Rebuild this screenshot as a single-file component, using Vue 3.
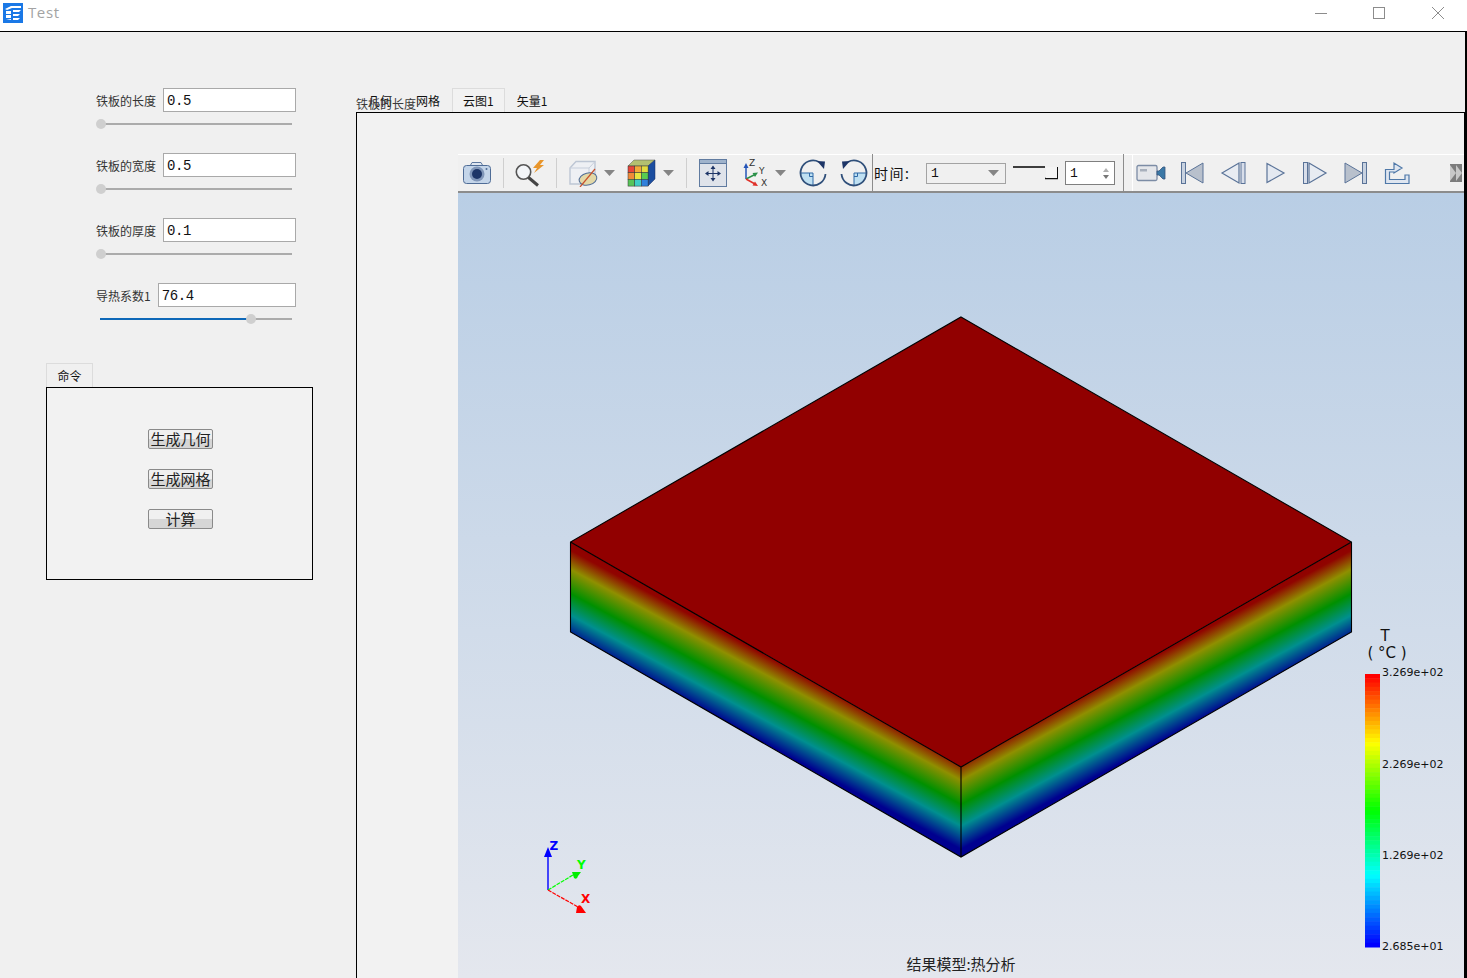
<script setup>
const params = [
  { label: '铁板的长度', value: '0.5', pct: 0 },
  { label: '铁板的宽度', value: '0.5', pct: 0 },
  { label: '铁板的厚度', value: '0.1', pct: 0 },
  { label: '导热系数1', value: '76.4', pct: 78 },
]

const commands = ['生成几何', '生成网格', '计算']
const tabs = ['几何', '网格', '云图1', '矢量1']

// legend colours, red at the top to blue at the bottom
const stops = [
  [0, [255, 0, 0]],
  [0.25, [255, 255, 0]],
  [0.5, [0, 255, 0]],
  [0.74, [0, 255, 255]],
  [1, [0, 0, 255]],
]

function legendColor(t) {
  for (let i = 1; i < stops.length; i++) {
    if (t <= stops[i][0]) {
      const [t0, c0] = stops[i - 1]
      const [t1, c1] = stops[i]
      const k = (t - t0) / (t1 - t0)
      const c = c0.map((v, n) => Math.round(v + (c1[n] - v) * k))
      return `rgb(${c.join(',')})`
    }
  }
  return 'rgb(0,0,255)'
}

const bandCount = 64
const bandHeight = 273 / bandCount
const bands = Array.from({ length: bandCount }, (_, i) => ({
  y: 674 + i * bandHeight,
  color: legendColor(i / (bandCount - 1)),
}))

const legendLabels = [
  { text: '3.269e+02', y: 676 },
  { text: '2.269e+02', y: 768 },
  { text: '1.269e+02', y: 859 },
  { text: '2.685e+01', y: 950 },
]

// offsets along a 100px gradient, the plate side is 90px tall
const faceStops = [
  [0, '#900000'],
  [0.08, '#900400'],
  [0.27, '#8f8f00'],
  [0.513, '#009000'],
  [0.729, '#008f8f'],
  [0.96, '#00008f'],
]

const cubeCells = [
  ['#e8453a', '#f4a838', '#e4dc40'],
  ['#f08a38', '#e8e440', '#58cc50'],
  ['#58c458', '#40ccc4', '#3080dc'],
]
</script>

<template>
  <div class="window">
    <header class="titlebar">
      <svg class="app-icon" width="20" height="20" viewBox="0 0 20 20">
        <rect width="20" height="20" fill="#1a78e6" />
        <path d="M2 6 L8 3 L18 3 L18 5 L9 5 L4 7 Z" fill="#fff" />
        <path d="M3 8 h5 v3 h-5 Z M3 12 h5 v3 h-5 Z M3 16 l5 1 v-1 h-5 Z" fill="#fff" />
        <path d="M10 7 h8 l-2 2 h-6 Z M10 11 h7 l-2 2 h-5 Z M10 15 h7 l-2 2 h-5 Z" fill="#fff" />
      </svg>
      <span class="app-title">Test</span>
      <div class="win-controls">
        <span class="win-btn"><svg width="14" height="14" viewBox="0 0 14 14"><path d="M1 7.5 H13" stroke="#8c8c8c" fill="none" /></svg></span>
        <span class="win-btn"><svg width="14" height="14" viewBox="0 0 14 14"><rect x="1.5" y="1.5" width="11" height="11" stroke="#8c8c8c" fill="none" /></svg></span>
        <span class="win-btn"><svg width="14" height="14" viewBox="0 0 14 14"><path d="M1 1 L13 13 M13 1 L1 13" stroke="#8c8c8c" fill="none" /></svg></span>
      </div>
    </header>

    <div class="body">
      <aside class="sidebar">
        <div class="params">
          <div v-for="p in params" :key="p.label" class="param">
            <div class="param-row">
              <label class="param-label">{{ p.label }}</label>
              <input class="param-input" :value="p.value" readonly />
            </div>
            <div class="slider">
              <div class="slider-fill" :style="{ width: p.pct + '%' }"></div>
              <div class="slider-thumb" :style="{ left: p.pct + '%' }"></div>
            </div>
          </div>
        </div>

        <div class="command">
          <div class="command-tab">命令</div>
          <div class="command-pane">
            <button v-for="c in commands" :key="c" class="cmd-btn">{{ c }}</button>
          </div>
        </div>
      </aside>

      <main class="main">
        <nav class="tabs">
          <span class="stray-label">铁板的长度</span>
          <span v-for="t in tabs" :key="t" class="tab" :class="{ active: t === '云图1' }">{{ t }}</span>
        </nav>

        <section class="pane">
          <div class="toolbar">
            <!-- camera -->
            <svg class="ml-4" width="30" height="28" viewBox="0 0 30 28">
              <path d="M8 7 L10 3.5 H19 L21 7" fill="#dfe6f0" stroke="#5c779e" />
              <rect x="1.5" y="6.5" width="27" height="18" rx="3" fill="#c4d5e9" stroke="#4f6c96" />
              <circle cx="15" cy="15" r="7.5" fill="#8096b8" />
              <circle cx="15" cy="15" r="5" fill="#1d3567" />
              <circle cx="24.5" cy="10" r="1" fill="#4f6c96" />
            </svg>
            <i class="sep ml-11"></i>
            <!-- search with bolt -->
            <svg class="ml-11" width="30" height="28" viewBox="0 0 30 28">
              <circle cx="8.5" cy="13" r="7.2" fill="#f3f5f8" stroke="#555" stroke-width="1.6" />
              <path d="M13.5 18.5 L23 26.5" stroke="#444" stroke-width="3" />
              <path d="M25 1 L18 9 H22 L19 14 L29 6 H25 L29 1 Z" fill="#e8952b" />
            </svg>
            <i class="sep ml-11"></i>
            <!-- box with hidden surface -->
            <svg class="ml-11" width="30" height="28" viewBox="0 0 30 28">
              <path d="M2 9 L8 2.5 H27 V18 L21 25 H2 Z" fill="#eef0f4" stroke="#bdc6d4" stroke-width="1.4" />
              <path d="M2 9 H21 V25 M21 9 L27 2.5" fill="none" stroke="#c6cedb" />
              <ellipse cx="20" cy="20" rx="9" ry="6" fill="#e3d8a6" stroke="#4f6c96" transform="rotate(-14 20 20)" />
              <path d="M12 28 L27 10" stroke="#c8502a" stroke-width="1.2" />
            </svg>
            <i class="caret ml-6"></i>
            <!-- colour cube -->
            <svg class="ml-11" width="30" height="28" viewBox="0 0 30 28">
              <path d="M2 7 L8 1 H29 L22 7 Z" fill="#b4c070" stroke="#555" stroke-width="0.5" />
              <path d="M22 7 L29 1 V20 L22 27 Z" fill="#1c4ea0" stroke="#1b2f60" stroke-width="0.5" />
              <template v-for="(row, r) in cubeCells" :key="r">
                <rect v-for="(fill, c) in row" :key="c" :x="2 + c * 6.7" :y="7 + r * 6.7" width="6.7" height="6.7" :fill="fill" stroke="#333" stroke-width="0.5" />
              </template>
            </svg>
            <i class="caret ml-7"></i>
            <i class="sep ml-12"></i>
            <!-- fit view -->
            <svg class="ml-11" width="30" height="28" viewBox="0 0 30 28">
              <rect x="1.5" y="0.5" width="27" height="27" fill="#dfe3ea" stroke="#607ba0" />
              <rect x="1.5" y="0.5" width="27" height="4" fill="#9fb3cc" stroke="#607ba0" />
              <path d="M15 8 V21 M8.5 14.5 H21.5" stroke="#1d3567" />
              <path d="M15 6.5 L12.5 10 H17.5 Z M15 22.5 L12.5 19 H17.5 Z M7 14.5 L10.5 12 V17 Z M23 14.5 L19.5 12 V17 Z" fill="#1d3567" />
            </svg>
            <!-- axes -->
            <svg class="ml-14" width="28" height="28" viewBox="0 0 28 28">
              <path d="M4 20 V7" stroke="#2454b8" stroke-width="1.5" />
              <path d="M4 4 L1.5 9 H6.5 Z" fill="#2454b8" />
              <path d="M4 20 L13 15.5" stroke="#2a9048" stroke-width="1.5" />
              <path d="M16 13.5 L10.5 14 L13 18 Z" fill="#2a9048" />
              <path d="M4 20 L13 25" stroke="#e03028" stroke-width="1.5" />
              <path d="M16 27 L10.5 26.5 L13 22.5 Z" fill="#e03028" />
              <text x="7" y="7" class="axis-letter">Z</text>
              <text x="17" y="14.5" class="axis-letter">Y</text>
              <text x="19" y="27" class="axis-letter">X</text>
            </svg>
            <i class="caret ml-5"></i>
            <!-- rotate cw -->
            <svg class="ml-13" width="28" height="28" viewBox="0 0 28 28">
              <path d="M14 14 H1.5 A12.5 12.5 0 0 0 14 26.5 Z" fill="#bfe0f2" />
              <path d="M1.5 14 H14 V26.5 M10.5 14 V17.5 H14" fill="none" stroke="#2f6aa8" />
              <path d="M26.5 15 A12.5 12.5 0 1 1 20 3" fill="none" stroke="#2f4f7a" stroke-width="1.8" />
              <path d="M18 2 L26 2.5 L25 10 Z" fill="#1d3567" />
            </svg>
            <!-- rotate ccw -->
            <svg class="ml-13" width="28" height="28" viewBox="0 0 28 28">
              <g transform="matrix(-1 0 0 1 28 0)">
                <path d="M14 14 H1.5 A12.5 12.5 0 0 0 14 26.5 Z" fill="#bfe0f2" />
                <path d="M1.5 14 H14 V26.5 M10.5 14 V17.5 H14" fill="none" stroke="#2f6aa8" />
                <path d="M26.5 15 A12.5 12.5 0 1 1 20 3" fill="none" stroke="#2f4f7a" stroke-width="1.8" />
                <path d="M18 2 L26 2.5 L25 10 Z" fill="#1d3567" />
              </g>
            </svg>
            <i class="sep-full ml-4"></i>
            <span class="time-label ml-1">时间:</span>
            <div class="combo ml-14">
              <span>1</span>
              <i class="caret"></i>
            </div>
            <svg class="ml-7" width="45" height="14" viewBox="0 0 45 14">
              <path d="M0 1 H32" stroke="#111" stroke-width="1.6" />
              <path d="M44.5 1 V12.5 H32" fill="none" stroke="#111" stroke-width="1.4" />
              <path d="M44 1 H33 V12 H44 Z" fill="#f4f4f4" />
            </svg>
            <div class="spin ml-7">
              <span>1</span>
              <span class="spin-arrows"><i></i><i></i></span>
            </div>
            <i class="sep-full ml-8"></i>
            <div class="playback ml-8">
              <!-- record -->
              <svg class="ml-3" width="30" height="18" viewBox="0 0 30 18">
                <rect x="1" y="1.5" width="20" height="15" rx="1.5" fill="#e4e6ea" stroke="#7c8ca5" stroke-width="1.3" />
                <rect x="4" y="5" width="7" height="2.5" fill="#a8b0bc" />
                <path d="M21 7 H23 L27 3 H29 V15 H27 L23 11 H21 Z" fill="#3a78a6" stroke="#39557e" stroke-width="0.8" />
              </svg>
              <!-- first -->
              <svg class="ml-14" width="24" height="24" viewBox="0 0 24 24">
                <rect x="1.5" y="1.5" width="4" height="21" fill="#c8d2e0" stroke="#5a7398" />
                <path d="M6 12 L23 2 V22 Z" fill="#b8c0cc" stroke="#5a7398" />
              </svg>
              <!-- previous -->
              <svg class="ml-16" width="26" height="24" viewBox="0 0 26 24">
                <path d="M2 12 L19 2 V22 Z" fill="#e8ecf2" stroke="#5a7398" stroke-width="1.2" />
                <rect x="21" y="1.5" width="4" height="21" fill="#d8deea" stroke="#5a7398" />
              </svg>
              <!-- play -->
              <svg class="ml-18" width="22" height="24" viewBox="0 0 22 24">
                <path d="M3 2.5 L20 12 L3 21.5 Z" fill="#e4e9f1" stroke="#5a7398" stroke-width="1.2" />
              </svg>
              <!-- next -->
              <svg class="ml-16" width="26" height="24" viewBox="0 0 26 24">
                <rect x="1.5" y="1.5" width="4" height="21" fill="#d8deea" stroke="#5a7398" />
                <path d="M7 2 L24 12 L7 22 Z" fill="#e8ecf2" stroke="#5a7398" stroke-width="1.2" />
              </svg>
              <!-- last -->
              <svg class="ml-16" width="24" height="24" viewBox="0 0 24 24">
                <path d="M1 2 L18 12 L1 22 Z" fill="#b8c0cc" stroke="#5a7398" />
                <rect x="18.5" y="1.5" width="4" height="21" fill="#c8d2e0" stroke="#5a7398" />
              </svg>
              <!-- export -->
              <svg class="ml-16" width="28" height="24" viewBox="0 0 28 24">
                <path d="M1.5 22.5 V8.5 H10 V2 L18 7 L10 12 V11 H5.5 V18.5 H21 V14 H25 V22.5 Z" fill="#dfe6f0" stroke="#4f78a8" stroke-width="1.2" />
              </svg>
              <!-- overflow handle -->
              <svg class="ml-38" width="12" height="18" viewBox="0 0 12 18">
                <rect width="12" height="18" fill="#7c7c7c" />
                <path d="M0 1 L6 9 L0 17 Z M6 1 L12 9 L6 17 Z" fill="#c8c8c8" />
              </svg>
            </div>
          </div>

          <svg class="scene" viewBox="458 193 1006 785" width="1006" height="785">
            <defs>
              <linearGradient id="sky" x1="0" y1="0" x2="0" y2="1">
                <stop offset="0" stop-color="#b9cee5" />
                <stop offset="1" stop-color="#e4e7ee" />
              </linearGradient>
              <linearGradient id="leftFace" gradientUnits="userSpaceOnUse" x1="0" y1="0" x2="0" y2="100" gradientTransform="matrix(1 0.54 0 1 570 542)">
                <stop v-for="s in faceStops" :key="s[0]" :offset="s[0]" :stop-color="s[1]" />
              </linearGradient>
              <linearGradient id="rightFace" gradientUnits="userSpaceOnUse" x1="0" y1="0" x2="0" y2="100" gradientTransform="matrix(1 -0.54 0 1 1352 542)">
                <stop v-for="s in faceStops" :key="s[0]" :offset="s[0]" :stop-color="s[1]" />
              </linearGradient>
            </defs>
            <rect x="458" y="193" width="1006" height="785" fill="url(#sky)" />

            <!-- plate -->
            <path d="M570.5 542 L961 767 V857 L570.5 632 Z" fill="url(#leftFace)" />
            <path d="M961 767 L1351.5 542 V632 L961 857 Z" fill="url(#rightFace)" />
            <path d="M961 317 L1351.5 542 L961 767 L570.5 542 Z" fill="#910000" />
            <path d="M961 317 L1351.5 542 V632 L961 857 L570.5 632 V542 Z M570.5 542 L961 767 L1351.5 542 M961 767 V857" fill="none" stroke="#000" stroke-width="1.1" />

            <!-- triad -->
            <path d="M548 890 V855" stroke="#0000ff" stroke-width="1.4" />
            <path d="M548 847 L544 857 H552 Z" fill="#0000ff" />
            <text x="549.5" y="850" class="triad" fill="#0000ff">Z</text>
            <path d="M548 890 L573 875" stroke="#00ff00" stroke-width="1.2" stroke-dasharray="4 1" />
            <path d="M581 872 L572 872 L574 878 Q577 880 578 876 Z" fill="#00ee00" />
            <text x="577" y="869" class="triad" fill="#00ff00">Y</text>
            <path d="M548 890 L578 907" stroke="#ff0000" stroke-width="1.2" stroke-dasharray="4 1" />
            <path d="M586 913 L576 913 L577 907 Q579 904 581 906 Z" fill="#ff0000" />
            <text x="581" y="903" class="triad" fill="#ff0000">X</text>

            <!-- legend -->
            <text x="1385" y="641" class="legend-title" text-anchor="middle">T</text>
            <text x="1387" y="658" class="legend-title" text-anchor="middle">( °C )</text>
            <rect v-for="(b, i) in bands" :key="i" x="1365" :y="b.y" width="15" :height="bandHeight + 0.5" :fill="b.color" />
            <text v-for="l in legendLabels" :key="l.text" x="1382" :y="l.y" class="legend-label">{{ l.text }}</text>

            <text x="961" y="970" class="scene-caption" text-anchor="middle">结果模型:热分析</text>
          </svg>
        </section>
      </main>
    </div>
  </div>
</template>

<style scoped>
.window {
  width: 1467px;
  height: 978px;
  display: flex;
  flex-direction: column;
  overflow: hidden;
  background: #fff;
  font-family: "Noto Sans CJK SC", "Liberation Sans", sans-serif;
  color: #111;
}

.titlebar {
  flex: none;
  height: 31px;
  display: flex;
  align-items: center;
  padding-left: 3px;
  background: #fff;
  border-bottom: 1px solid #000;
}

.app-icon {
  margin-top: -6px;
}

.app-title {
  margin-left: 5px;
  margin-top: -8px;
  font-family: "Open Sans", sans-serif;
  font-size: 15px;
  letter-spacing: 0.6px;
  color: #a3a3a3;
}

.win-controls {
  margin-left: auto;
  margin-top: -6px;
  display: flex;
}

.win-btn {
  width: 58.5px;
  display: flex;
  justify-content: center;
}

.body {
  flex: 1;
  min-height: 0;
  display: flex;
  background: #f0f0f0;
  border-right: 2px solid #000;
}

.sidebar {
  flex: none;
  width: 356px;
  padding: 56px 0 0 46px;
  box-sizing: border-box;
}

.params {
  margin-left: 50px;
  width: 200px;
}

.param {
  height: 65px;
}

.param-row {
  display: flex;
  align-items: center;
  gap: 7px;
  height: 24px;
}

.param-label {
  font-size: 12px;
  color: #333;
  white-space: nowrap;
}

.param-input {
  flex: 1;
  min-width: 0;
  height: 24px;
  box-sizing: border-box;
  padding: 2px 3px 0;
  border: 1px solid #a9a9a9;
  background: #fff;
  font-family: "Liberation Mono", monospace;
  font-size: 14px;
  letter-spacing: -0.4px;
  color: #111;
  outline: none;
}

.slider {
  position: relative;
  margin: 11px 0 0 4px;
  width: 192px;
  height: 2px;
  background: #ababab;
}

.slider-fill {
  height: 2px;
  background: #0e68b8;
}

.slider-thumb {
  position: absolute;
  top: -4px;
  width: 10px;
  height: 10px;
  margin-left: -4px;
  border-radius: 50%;
  background: #cfcfcf;
}

.command {
  margin-top: 15px;
  width: 267px;
}

.command-tab {
  width: 47px;
  height: 24px;
  box-sizing: border-box;
  border: 1px solid #dcdcdc;
  border-bottom: none;
  background: #f0f0f0;
  font-size: 12px;
  line-height: 24px;
  text-align: center;
}

.command-pane {
  height: 193px;
  box-sizing: border-box;
  border: 1px solid #000;
  background: #f2f2f2;
  display: flex;
  flex-direction: column;
  align-items: center;
  gap: 20px;
  padding: 41px 0 0 2px;
}

.cmd-btn {
  flex: none;
  width: 65px;
  height: 20px;
  padding: 0 0 2px;
  box-sizing: border-box;
  border: 1px solid #8a8a8a;
  border-radius: 2px;
  background: linear-gradient(#f0f0f0 50%, #d6d6d6 50%);
  font-family: inherit;
  font-size: 15px;
  line-height: 15px;
  color: #222;
  white-space: nowrap;
  overflow: hidden;
}

.main {
  flex: 1;
  min-width: 0;
  display: flex;
  flex-direction: column;
  padding-top: 56px;
}

.tabs {
  position: relative;
  flex: none;
  height: 24px;
  display: flex;
  font-size: 12px;
}

.tab {
  padding: 0 12px;
  line-height: 26px;
  white-space: nowrap;
}

.tab.active {
  padding: 0 10px;
  background: #f2f2f2;
  border: 1px solid #dcdcdc;
  border-bottom: none;
  line-height: 24px;
}

.stray-label {
  position: absolute;
  left: 0;
  top: 7px;
  font-size: 12px;
  line-height: 18px;
  color: #3a3a3a;
}

.pane {
  flex: 1;
  min-height: 0;
  padding: 42px 0 0 101px;
  border: 1px solid #000;
  border-bottom: none;
  background: #f2f2f2;
  overflow: hidden;
}

.toolbar {
  height: 36px;
  box-sizing: content-box;
  display: flex;
  align-items: center;
  background: #f0f0f0;
  border-top: 1px solid #fff;
  border-bottom: 2px solid #8c8c8c;
  margin-top: -1px;
}

.toolbar > svg,
.playback > svg {
  flex: none;
}

.sep {
  flex: none;
  width: 1px;
  height: 30px;
  background: #cfcfcf;
}

.sep-full {
  flex: none;
  width: 1px;
  height: 38px;
  background: #8c8c8c;
}

.caret {
  flex: none;
  width: 11px;
  height: 6px;
  background: #858585;
  clip-path: polygon(0 0, 100% 0, 50% 100%);
}

.time-label {
  flex: none;
  width: 38px;
  font-size: 14px;
  letter-spacing: 1.5px;
  white-space: nowrap;
}

.combo {
  flex: none;
  width: 80px;
  height: 21px;
  box-sizing: border-box;
  border: 1px solid #a3a3a3;
  display: flex;
  align-items: center;
  justify-content: space-between;
  padding: 0 6px 0 4px;
  font-family: "Liberation Mono", monospace;
  font-size: 13px;
}

.spin {
  flex: none;
  width: 50px;
  height: 24px;
  box-sizing: border-box;
  border: 1px solid #7f7f7f;
  background: #fff;
  display: flex;
  align-items: center;
  justify-content: space-between;
  padding: 0 5px 0 4px;
  font-family: "Liberation Mono", monospace;
  font-size: 13px;
}

.spin-arrows {
  display: flex;
  flex-direction: column;
  gap: 3px;
}

.spin-arrows i {
  width: 0;
  height: 0;
  border-left: 3px solid transparent;
  border-right: 3px solid transparent;
  border-bottom: 4px solid #b0b0b0;
}

.spin-arrows i:last-child {
  border-bottom: none;
  border-top: 4px solid #777;
}

.playback {
  flex: 1;
  align-self: stretch;
  display: flex;
  align-items: center;
  border-left: 1px solid #fff;
}

.axis-letter {
  font-family: "DejaVu Sans", sans-serif;
  font-size: 9px;
  fill: #333;
}

.scene {
  display: block;
}

.triad {
  font-family: "DejaVu Sans", sans-serif;
  font-size: 12px;
  font-weight: 700;
}

.legend-title {
  font-family: "DejaVu Sans", sans-serif;
  font-size: 15px;
  fill: #111;
}

.legend-label {
  font-family: "DejaVu Sans", sans-serif;
  font-size: 11px;
  fill: #111;
}

.scene-caption {
  font-family: "Noto Sans CJK SC", sans-serif;
  font-size: 15px;
  fill: #222;
}

.ml-1 { margin-left: 1px; }
.ml-3 { margin-left: 3px; }
.ml-4 { margin-left: 4px; }
.ml-5 { margin-left: 5px; }
.ml-6 { margin-left: 6px; }
.ml-7 { margin-left: 7px; }
.ml-8 { margin-left: 8px; }
.ml-11 { margin-left: 11px; }
.ml-12 { margin-left: 12px; }
.ml-13 { margin-left: 13px; }
.ml-14 { margin-left: 14px; }
.ml-16 { margin-left: 16px; }
.ml-18 { margin-left: 18px; }
.ml-38 { margin-left: 38px; }
</style>
